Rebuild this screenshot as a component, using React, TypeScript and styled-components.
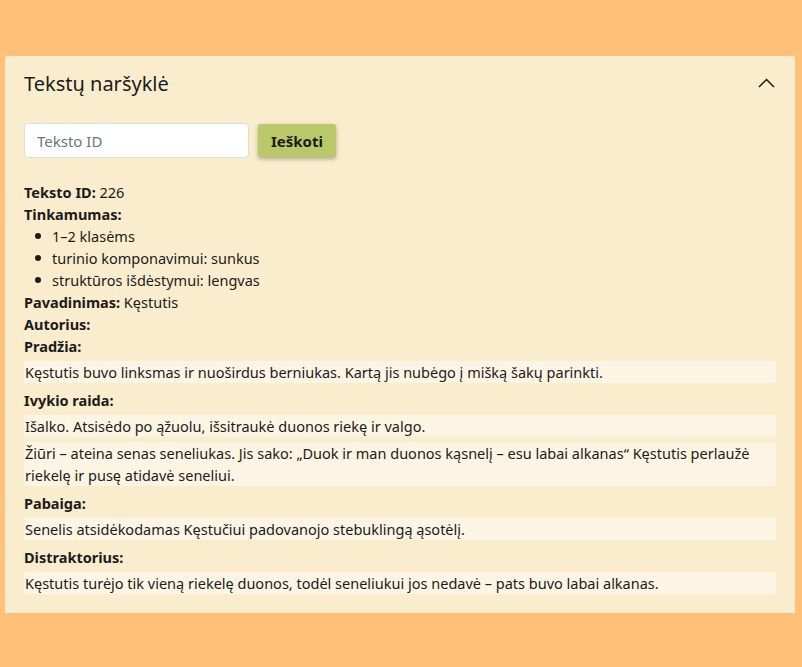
import styled, { createGlobalStyle } from "styled-components";

const GlobalStyle = createGlobalStyle`
  html, body {
    margin: 0;
    padding: 0;
    background: #ffc177;
  }
  body {
    font-family: "Noto Sans", "Open Sans", sans-serif;
    color: #1b1b1b;
  }
`;

type Paragraph = { label: string; blocks: string[] };

const paragraphs: Paragraph[] = [
  {
    label: "Pradžia:",
    blocks: ["Kęstutis buvo linksmas ir nuoširdus berniukas. Kartą jis nubėgo į mišką šakų parinkti."],
  },
  {
    label: "Ivykio raida:",
    blocks: [
      "Išalko. Atsisėdo po ąžuolu, išsitraukė duonos riekę ir valgo.",
      "Žiūri – ateina senas seneliukas. Jis sako: „Duok ir man duonos kąsnelį – esu labai alkanas“ Kęstutis perlaužė riekelę ir pusę atidavė seneliui.",
    ],
  },
  {
    label: "Pabaiga:",
    blocks: ["Senelis atsidėkodamas Kęstučiui padovanojo stebuklingą ąsotėlį."],
  },
  {
    label: "Distraktorius:",
    blocks: ["Kęstutis turėjo tik vieną riekelę duonos, todėl seneliukui jos nedavė – pats buvo labai alkanas."],
  },
];

export default function App() {
  return (
    <>
      <GlobalStyle />
      <Card>
        <Header>
          <Title>Tekstų naršyklė</Title>
          <svg width="17" height="10" viewBox="0 0 17 10" fill="none">
            <polyline points="1,9 8.5,1.5 16,9" stroke="#1b1b1b" strokeWidth="1.5" />
          </svg>
        </Header>
        <Body>
          <SearchRow>
            <Input placeholder="Teksto ID" />
            <SearchButton>Ieškoti</SearchButton>
          </SearchRow>
          <Details>
            <Line>
              <b>Teksto ID:</b> 226
            </Line>
            <Line>
              <b>Tinkamumas:</b>
            </Line>
            <List>
              <li>1–2 klasėms</li>
              <li>turinio komponavimui: sunkus</li>
              <li>struktūros išdėstymui: lengvas</li>
            </List>
            <Line>
              <b>Pavadinimas:</b> Kęstutis
            </Line>
            <Line>
              <b>Autorius:</b>
            </Line>
            {paragraphs.map((p) => (
              <div key={p.label}>
                <Line>
                  <b>{p.label}</b>
                </Line>
                <Blocks>
                  {p.blocks.map((t) => (
                    <TextBlock key={t}>{t}</TextBlock>
                  ))}
                </Blocks>
              </div>
            ))}
          </Details>
        </Body>
      </Card>
    </>
  );
}

const Card = styled.div`
  margin: 56px 7px 0 5px;
  background: #faedcd;
  padding-bottom: 13px;
`;

const Header = styled.div`
  height: 54px;
  padding: 0 19px;
  display: flex;
  align-items: center;
  justify-content: space-between;

  svg {
    margin-right: 1px;
  }
`;

const Title = styled.h2`
  margin: 0;
  font-size: 20px;
  font-weight: 400;
`;

const Body = styled.div`
  padding: 13px 19px 0;
`;

const SearchRow = styled.div`
  display: flex;
  align-items: center;
  gap: 9px;
`;

const Input = styled.input`
  box-sizing: border-box;
  width: 225px;
  height: 35px;
  padding: 0 12px;
  border: 1px solid #dcdcdc;
  border-radius: 4px;
  background: #fff;
  font-family: inherit;
  font-size: 15px;

  &::placeholder {
    color: #6c757d;
  }
`;

const SearchButton = styled.button`
  height: 33px;
  padding: 0 13px;
  border: none;
  border-radius: 3px;
  background: #b9c96a;
  box-shadow: 0 2px 4px rgba(0, 0, 0, 0.3);
  font-family: inherit;
  font-size: 15px;
  font-weight: 700;
  color: #1b1b1b;
`;

const Details = styled.div`
  margin-top: 23px;
  font-size: 14.5px;
  line-height: 22px;
`;

const Line = styled.div``;

const List = styled.ul`
  margin: 0;
  padding-left: 11px;
  list-style: none;

  li {
    display: flex;
    align-items: center;
  }

  li::before {
    content: "";
    width: 6px;
    height: 6px;
    border-radius: 50%;
    background: #1b1b1b;
    margin-right: 11px;
  }
`;

const Blocks = styled.div`
  display: flex;
  flex-direction: column;
  gap: 5px;
  margin: 4px 0 6px;
`;

const TextBlock = styled.div`
  background: #fdf5e4;
  padding: 0 1px;
`;
